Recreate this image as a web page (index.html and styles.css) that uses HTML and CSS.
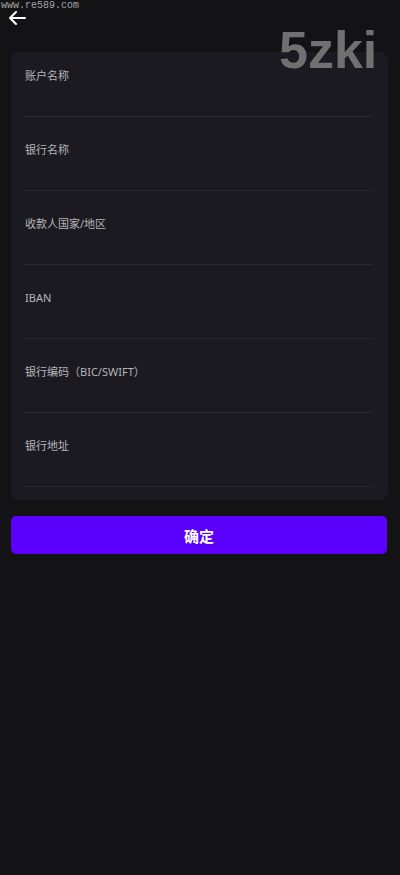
FILE: index.html
```html
<!DOCTYPE html>
<html lang="zh-CN">
<head>
    <meta charset="UTF-8">
    <meta name="viewport" content="width=device-width, initial-scale=1.0">
    <title>银行账户</title>
    <link rel="stylesheet" href="styles.css">
</head>
<body>
    <div class="site-mark">www.re589.com</div>
    <div class="brand-mark">5zki</div>

    <header class="top-bar">
        <button class="back-btn" aria-label="返回">
            <svg width="18" height="14" viewBox="0 0 18 14">
                <path d="M17 7H2M8 1L2 7l6 6" fill="none" stroke="#ffffff" stroke-width="2" stroke-linecap="round" stroke-linejoin="round"/>
            </svg>
        </button>
    </header>

    <form class="bank-form">
        <div class="field">
            <label>账户名称</label>
            <input type="text">
        </div>
        <div class="field">
            <label>银行名称</label>
            <input type="text">
        </div>
        <div class="field">
            <label>收款人国家/地区</label>
            <input type="text">
        </div>
        <div class="field">
            <label>IBAN</label>
            <input type="text">
        </div>
        <div class="field">
            <label>银行编码（BIC/SWIFT）</label>
            <input type="text">
        </div>
        <div class="field">
            <label>银行地址</label>
            <input type="text">
        </div>
    </form>

    <button class="submit-btn" type="button">确定</button>
</body>
</html>
```

FILE: styles.css
```css
* {
    margin: 0;
    padding: 0;
    box-sizing: border-box;
}

body {
    font-family: "Noto Sans", "Noto Sans CJK SC", sans-serif;
    background-color: #131316;
    color: #b6b5bb;
    width: 400px;
    min-height: 875px;
    position: relative;
}

.site-mark {
    position: absolute;
    left: 1px;
    top: 0;
    font-family: "Liberation Mono", monospace;
    font-size: 10px;
    color: #a3a3a3;
}

.brand-mark {
    position: absolute;
    left: 279px;
    top: 24px;
    font-family: "Liberation Sans", Arial, sans-serif;
    font-size: 52px;
    font-weight: bold;
    line-height: 1;
    color: #707071;
    z-index: 2;
}

.top-bar {
    height: 52px;
    padding: 10px 0 0 8px;
}

.back-btn {
    background: none;
    border: none;
    width: 20px;
    height: 16px;
    display: flex;
    align-items: center;
    cursor: pointer;
}

.bank-form {
    margin: 0 12px 0 11px;
    background-color: #1b1a20;
    border-radius: 8px;
    padding: 0 15px 13px 13px;
}

.field {
    padding-top: 17px;
    border-bottom: 1px solid #29282f;
}

.field + .field {
    margin-top: 9px;
}

.field label {
    display: block;
    font-size: 11px;
    line-height: 14px;
    padding-left: 1px;
    color: #b6b5bb;
}

.field input {
    display: block;
    width: 100%;
    height: 33px;
    background: transparent;
    border: none;
    outline: none;
    color: #ffffff;
}

.submit-btn {
    display: block;
    margin: 16px 13px 0 11px;
    width: 376px;
    height: 38px;
    background-color: #5c00fe;
    color: #ffffff;
    border: none;
    border-radius: 5px;
    font-family: "Noto Sans CJK SC", sans-serif;
    font-size: 15px;
    font-weight: bold;
    cursor: pointer;
}
```
